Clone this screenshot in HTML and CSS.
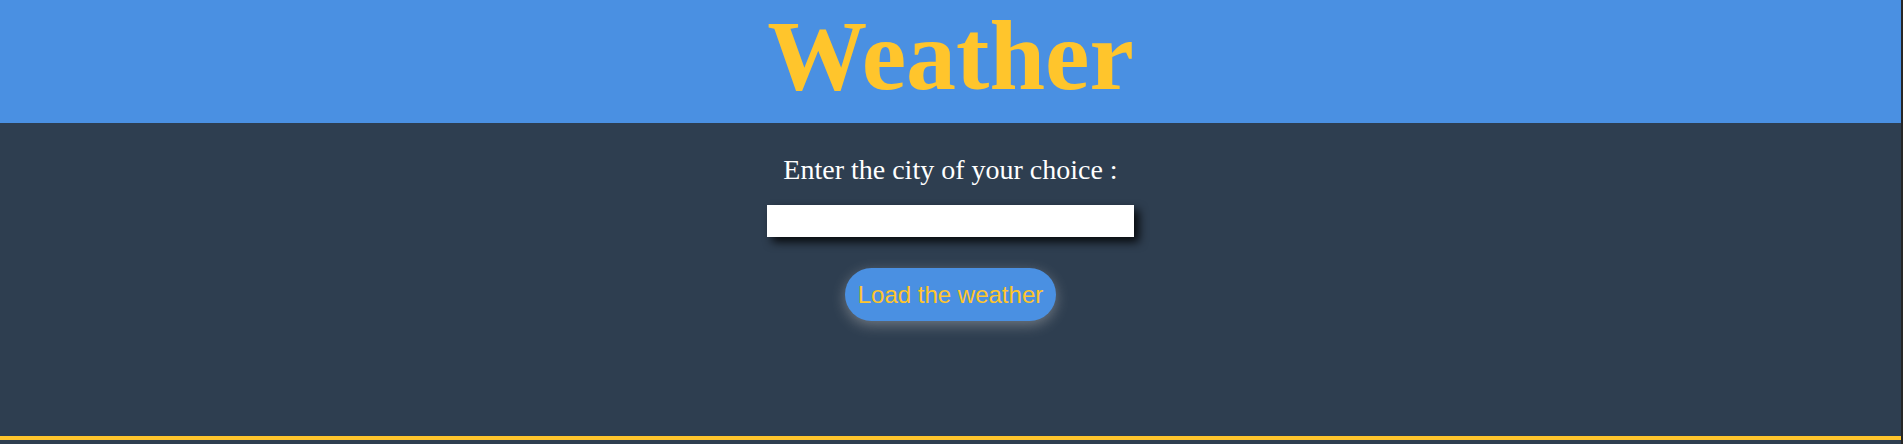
FILE: index.html
```html
<!DOCTYPE html>
<html lang="en">
<head>
<meta charset="utf-8">
<title>Weather</title>
<link rel="stylesheet" href="styles.css">
</head>
<body>
<div class="page">
  <header class="banner">
    <h1 class="title">Weather</h1>
  </header>
  <main class="panel">
    <label class="prompt" for="city">Enter the city of your choice :</label>
    <input class="city-input" id="city" type="text">
    <button class="load-btn" type="button">Load the weather</button>
  </main>
</div>
</body>
</html>
```
FILE: styles.css
```css
html {
  background: #262626;
}
body {
  margin: 0;
  width: 1901px;
  min-height: 444px;
  background: #2e3e50;
}
.page {
  display: flex;
  flex-direction: column;
}
.banner {
  background: #4a90e2;
  height: 123px;
  box-sizing: border-box;
  padding-top: 6px;
  text-align: center;
}
.title {
  margin: 0;
  font-family: "Liberation Serif", "Times New Roman", serif;
  font-weight: bold;
  font-size: 100px;
  line-height: 100px;
  color: #ffc52c;
}
.panel {
  height: 317px;
  box-sizing: border-box;
  border-bottom: 4px solid #ffc52c;
  display: flex;
  flex-direction: column;
  align-items: center;
  padding-top: 31px;
}
.prompt {
  font-family: "Liberation Serif", "Times New Roman", serif;
  font-size: 28px;
  line-height: 32px;
  color: #ffffff;
}
.city-input {
  margin-top: 19px;
  width: 367px;
  height: 32px;
  box-sizing: border-box;
  border: none;
  background: #ffffff;
  box-shadow: 5px 5px 10px rgba(0, 0, 0, 0.85);
}
.load-btn {
  margin-top: 31px;
  width: 211px;
  height: 53px;
  border: none;
  border-radius: 27px;
  background: #4a90e2;
  color: #ffc52c;
  font-family: "Liberation Sans", Arial, sans-serif;
  font-size: 24px;
  padding: 0;
  box-shadow: 0 4px 14px rgba(190, 190, 190, 0.45);
}
```
